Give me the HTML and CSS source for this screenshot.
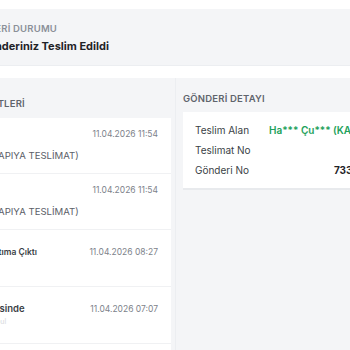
FILE: index.html
```html
<!DOCTYPE html>
<html lang="tr">
<head>
    <meta charset="UTF-8">
    <meta name="viewport" content="width=device-width, initial-scale=1.0">
    <title>Gönderi Takip</title>
    <link rel="stylesheet" href="styles.css">
</head>
<body>
    <div class="wrap">
        <div class="status-card">
            <div class="status-label">GÖNDERİ DURUMU</div>
            <div class="status-title">Gönderiniz Teslim Edildi</div>
        </div>

        <div class="columns">
            <div class="panel panel-left">
                <div class="panel-heading">GÖNDERİ HAREKETLERİ</div>
                <div class="card moves">
                    <div class="move move-short">
                        <div class="move-head">
                            <span class="move-title"></span>
                            <span class="move-time">11.04.2026 11:54</span>
                        </div>
                        <div class="move-desc">EV (KAPIYA TESLİMAT)</div>
                    </div>
                    <div class="move move-short">
                        <div class="move-head">
                            <span class="move-title"></span>
                            <span class="move-time">11.04.2026 11:54</span>
                        </div>
                        <div class="move-desc">EV (KAPIYA TESLİMAT)</div>
                    </div>
                    <div class="move">
                        <div class="move-head">
                            <span class="move-title">Dağıtıma Çıktı</span>
                            <span class="move-time">11.04.2026 08:27</span>
                        </div>
                        <div class="move-sub"></div>
                    </div>
                    <div class="move">
                        <div class="move-head">
                            <span class="move-title title-wide">Şubesinde</span>
                            <span class="move-time">11.04.2026 07:07</span>
                        </div>
                        <div class="move-sub">İstanbul</div>
                    </div>
                </div>
            </div>

            <div class="panel panel-right">
                <div class="panel-heading">GÖNDERİ DETAYI</div>
                <div class="card details">
                    <div class="detail-row">
                        <span class="detail-label">Teslim Alan</span>
                        <span class="detail-value value-green">Ha*** Çu*** (KAPIDA)</span>
                    </div>
                    <div class="detail-row">
                        <span class="detail-label">Teslimat No</span>
                        <span class="detail-value"></span>
                    </div>
                    <div class="detail-row">
                        <span class="detail-label">Gönderi No</span>
                        <span class="detail-value value-right">733104558210</span>
                    </div>
                </div>
            </div>
        </div>
    </div>
</body>
</html>
```

FILE: styles.css
```css
body {
    margin: 0;
    background-color: #fff;
    font-family: Inter, 'Noto Sans', sans-serif;
    color: #2b2f36;
    overflow: hidden;
}
.wrap {
    margin-left: -120px;
    width: 546px;
}
.status-card {
    margin-top: 9px;
    height: 57px;
    box-sizing: border-box;
    padding: 13px 0 0 100px;
    background-color: #f4f5f7;
    border-bottom: 1px solid #eceef1;
}
.status-label {
    margin-left: -14px;
    font-size: 9.5px;
    line-height: 14px;
    font-weight: 600;
    color: #8b9099;
    letter-spacing: 0.2px;
}
.status-title {
    margin-top: 1px;
    font-size: 11px;
    line-height: 18px;
    font-weight: 700;
    color: #1f2328;
}
.columns {
    margin-top: 12px;
    display: grid;
    grid-template-columns: 296px 1fr;
    height: 300px;
}
.panel {
    background-color: #f4f5f7;
}
.panel-left {
    padding: 19px 4px 0 15px;
    border-right: 1px solid #eceef1;
}
.panel-right {
    padding: 14px 7px 0 7px;
}
.panel-heading {
    font-size: 9.5px;
    line-height: 14px;
    font-weight: 600;
    color: #5f646c;
    letter-spacing: 0.2px;
}
.panel-left .panel-heading {
    padding-left: 16px;
    margin-bottom: 7px;
}
.panel-right .panel-heading {
    margin-bottom: 6px;
}
.card {
    background-color: #fff;
    border-bottom: 2px solid #e8eaed;
}
.moves {
    height: 260px;
}
.move {
    padding: 15px 13px 15px 85px;
    border-bottom: 1px solid #f0f1f3;
}
.move-short {
    padding-top: 9px;
    padding-bottom: 10px;
}
.move-head {
    display: flex;
    justify-content: space-between;
    line-height: 14px;
}
.move-title {
    font-size: 8.5px;
    font-weight: 600;
    color: #3a3e45;
}
.title-wide {
    margin-left: -4px;
    font-size: 9.5px;
}
.move-time {
    font-size: 8.5px;
    color: #7d828a;
}
.move-desc {
    margin-top: 8px;
    margin-left: -7px;
    font-size: 9.6px;
    line-height: 14px;
    color: #5b6068;
}
.move-sub {
    font-size: 7px;
    line-height: 12px;
    color: #d6d8dc;
    min-height: 12px;
}
.details {
    padding: 8px 12px;
}
.detail-row {
    display: flex;
    line-height: 20px;
    font-size: 10px;
}
.detail-label {
    width: 74px;
    color: #3b3f46;
}
.detail-value {
    flex: 1;
}
.value-green {
    color: #22a15a;
    font-weight: 600;
}
.value-right {
    text-align: right;
    font-weight: 700;
    color: #1f2328;
}
```
